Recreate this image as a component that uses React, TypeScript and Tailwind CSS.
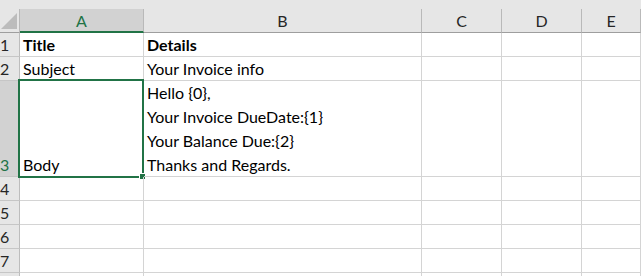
import type { ReactNode } from 'react'

const COLS = ['A', 'B', 'C', 'D', 'E']

type Row = {
  n: number
  cells: ReactNode[]
}

const rows: Row[] = [
  { n: 1, cells: [<b>Title</b>, <b>Details</b>] },
  { n: 2, cells: ['Subject', 'Your Invoice info'] },
  { n: 3, cells: ['Body', 'multi'] },
  { n: 4, cells: [] },
  { n: 5, cells: [] },
  { n: 6, cells: [] },
  { n: 7, cells: [] },
  { n: 8, cells: [] },
]

const bodyLines = [
  'Hello {0},',
  'Your Invoice DueDate:{1}',
  'Your Balance Due:{2}',
  'Thanks and Regards.',
]

function ColumnHeader({ label }: { label: string }) {
  const active = label === 'A'
  return (
    <div
      className={
        active
          ? 'flex items-end justify-center border-r border-b-2 border-r-[#b9b9b9] border-b-[#217346] bg-[#d2d2d2] leading-[21px] text-[#217346]'
          : 'flex items-end justify-center border-r border-b border-r-[#b9b9b9] border-b-[#9e9e9e] bg-[#e6e6e6] leading-[22px] text-[#262626]'
      }
    >
      {label}
    </div>
  )
}

function RowHeader({ n }: { n: number }) {
  const active = n === 3
  return (
    <div
      className={
        active
          ? 'flex items-end border-r border-b border-r-[#bdbdbd] border-b-[#c6c6c6] bg-[#d2d2d2] leading-[22px] text-[#217346]'
          : 'flex items-end border-r border-b border-r-[#bdbdbd] border-b-[#c6c6c6] bg-[#e6e6e6] leading-[22px] text-[#262626]'
      }
    >
      {/* row 8 sits below the fold, its number is not visible */}
      {n < 8 && <span>{n}</span>}
    </div>
  )
}

function Cell({ children, selected }: { children?: ReactNode; selected?: boolean }) {
  return (
    <div className="relative flex items-end whitespace-nowrap border-r border-b border-[#d4d4d4] px-[3px] leading-[22px]">
      {children}
      {selected && (
        <>
          <div className="pointer-events-none absolute -top-[2px] -left-[2px] h-[99px] w-[126px] border-2 border-[#217346]" />
          <div className="absolute top-[92px] left-[119px] h-[7px] w-[7px] border border-white bg-[#217346]" />
        </>
      )}
    </div>
  )
}

export default function App() {
  return (
    <div className="h-[276px] w-[641px] overflow-hidden bg-white font-['Lato',sans-serif] text-[16px] text-black">
      <div className="h-[9px] bg-[#e6e6e6]" />
      <div className="grid grid-cols-[20px_124px_278px_80px_80px_1fr] grid-rows-[24px_24px_24px_96px_24px_24px_24px_24px_24px]">
        <div className="relative border-r border-b border-r-[#b9b9b9] border-b-[#9e9e9e] bg-[#e6e6e6]">
          <svg className="absolute top-[4px] left-[1px]" width="16" height="16" viewBox="0 0 16 16">
            <polygon points="0,16 16,0 16,16" fill="#bcbcbc" />
          </svg>
        </div>
        {COLS.map((c) => (
          <ColumnHeader key={c} label={c} />
        ))}

        {rows.map((row) => (
          <div key={row.n} className="contents">
            <RowHeader n={row.n} />
            {COLS.map((c, i) => {
              const value = row.cells[i]
              if (value === 'multi') {
                return (
                  <Cell key={c}>
                    <div className="-mb-px leading-[24px]">
                      {bodyLines.map((line) => (
                        <div key={line}>{line}</div>
                      ))}
                    </div>
                  </Cell>
                )
              }
              return (
                <Cell key={c} selected={row.n === 3 && c === 'A'}>
                  {value}
                </Cell>
              )
            })}
          </div>
        ))}
      </div>
    </div>
  )
}
